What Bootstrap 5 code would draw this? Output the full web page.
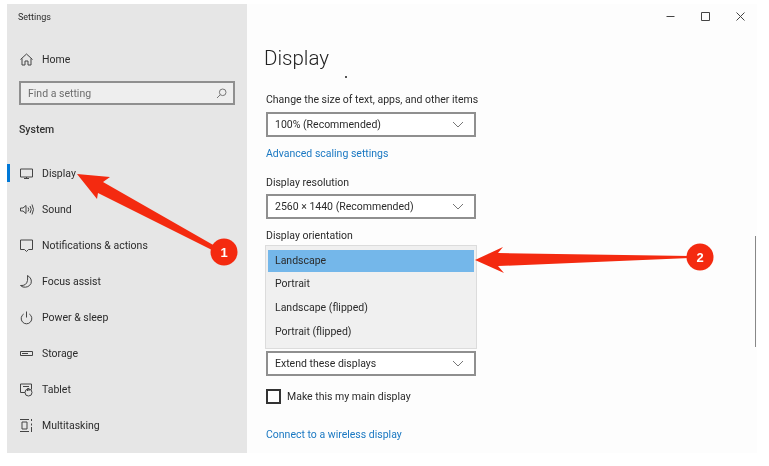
<!DOCTYPE html>
<html lang="en">
<head>
<meta charset="utf-8">
<title>Settings</title>
<link href="https://cdn.jsdelivr.net/npm/bootstrap@5.3.0/dist/css/bootstrap.min.css" rel="stylesheet">
<style>
html,body{height:100%;}
body{background:#fff;color:#2b2b2b;font-family:Roboto,"Open Sans","Liberation Sans",sans-serif;font-size:10.5px;line-height:14px;overflow:hidden;filter:blur(.25px);}
.shot{position:relative;width:769px;height:466px;padding:4px 12px 13px 7px;}
.winbox{height:449px;background:#fdfdfd;}
.sidepane{width:240px;background:#e6e6e6;flex:none;}
.apptitle{padding:6px 0 0 11px;height:25px;font-size:9px;}
.homerow{margin-top:20px;height:20px;padding-left:12px;}
.ico{width:15px;height:15px;flex:none;margin-right:8px;fill:none;stroke:#444;stroke-width:1;}
.nudge{margin-top:2px;}
.findbox{margin:12px 12px 0;height:24px;border:2px solid #8f8f8f;background:#eeeeee;padding:0 6px 0 7px;color:#6d6d6d;}
.systitle{margin:18px 0 0 12px;height:20px;font-weight:500;color:#333;}
.sidelist{margin-top:12px;}
.siderow{height:36px;padding-left:12px;position:relative;}
.siderow.cur::before{content:"";position:absolute;left:0;top:9px;width:3px;height:18px;background:#0078d7;}
.mainpane{position:relative;padding:0 0 0 19px;}
.topctl{height:24px;margin-right:-1px;justify-content:flex-end;}
.topctl span{width:35px;height:24px;display:flex;align-items:center;justify-content:center;}
.topctl svg{width:11px;height:11px;fill:none;stroke:#444;stroke-width:1;}
.pagetitle{margin:16px 0 0 -2px;height:28px;font-size:20.5px;line-height:28px;font-weight:300;color:#222;}
.tinydot{position:absolute;left:98px;top:72px;width:2px;height:2px;background:#555;}
.fieldlbl{height:14px;}
.lbl1{margin-top:21px;}
.pick{width:210px;height:25px;border:2px solid #8f8f8f;background:#fff;padding:0 10px 0 7px;margin-top:5px;}
.pick svg{width:12px;height:7px;fill:none;stroke:#777;stroke-width:1;}
.pick2{margin-top:4px;}
.bluelink{display:block;color:#1a78c2;text-decoration:none;}
.link1{margin-top:10px;}
.lbl2{margin-top:15px;}
.lbl3{margin-top:10px;}
.popmenu{width:212px;margin:2px 0 2px -1px;padding:4px 2px;height:104px;background:#f0f0f0;border:1px solid #dcdcdc;}
.popitem{height:24px;padding:0 0 1px 7px;display:flex;align-items:center;}
.popitem.sel{height:22px;background:#74b7ea;}
.tick{width:15px;height:15px;border:2px solid #333;background:#fff;margin-right:6px;flex:none;}
.tickrow{margin-top:13px;}
.link2{margin-top:24px;}
.scrollthumb{position:absolute;right:1px;top:232px;width:1px;height:111px;background:#888;}
.marks{position:absolute;left:0;top:0;width:769px;height:466px;pointer-events:none;}
.marks text{font:700 13px "Liberation Sans",sans-serif;fill:#fff;text-anchor:middle;}
</style>
</head>
<body>
<div class="shot">
  <div class="winbox d-flex">
    <aside class="sidepane">
      <div class="apptitle">Settings</div>
      <div class="homerow d-flex align-items-center">
        <svg class="ico" viewBox="0 0 15 15"><path d="M1.500 7.500 7.500 2l6 5.500M3 6.500V13h3V9h3v4h3V6.500"/></svg><span class="nudge">Home</span>
      </div>
      <div class="findbox d-flex align-items-center justify-content-between">
        <span class="nudge">Find a setting</span>
        <svg width="11" height="11" viewBox="0 0 11 11" fill="none" stroke="#777"><circle cx="6.700" cy="4.300" r="3.300"/><path d="M4.300 6.700 1 10"/></svg>
      </div>
      <div class="systitle">System</div>
      <div class="sidelist">
        <div class="siderow cur d-flex align-items-center"><svg class="ico" viewBox="0 0 15 15"><path d="M1.500 3h12v8h-12zM5 12.500h5M7.500 11v1.500"/></svg><span class="nudge">Display</span></div>
        <div class="siderow d-flex align-items-center"><svg class="ico" viewBox="0 0 15 15"><path d="M1.500 6v3H4l3 2.500v-8L4 6zM9 5.500q1.500 2 0 4M11 4q2.500 3.500 0 7M13 2.500q3 5 0 10"/></svg><span class="nudge">Sound</span></div>
        <div class="siderow d-flex align-items-center"><svg class="ico" viewBox="0 0 15 15"><path d="M1.500 2h12v9.500h-4l-2 2-2-2h-4z"/></svg><span class="nudge">Notifications &amp; actions</span></div>
        <div class="siderow d-flex align-items-center"><svg class="ico" viewBox="0 0 15 15"><path d="M8.500 1.500q5 3 3.500 8-2.500 4.500-8 3.500-1.500-.5-2.500-1.500 6 .5 7-5 .3-2.500 0-5z"/></svg><span class="nudge">Focus assist</span></div>
        <div class="siderow d-flex align-items-center"><svg class="ico" viewBox="0 0 15 15"><path d="M4.700 4a5.300 5.300 0 1 0 5.600 0M7.500 1.500v6"/></svg><span class="nudge">Power &amp; sleep</span></div>
        <div class="siderow d-flex align-items-center"><svg class="ico" viewBox="0 0 15 15"><path d="M1.500 5.500h12v4h-12zM3 7.500h6"/></svg><span class="nudge">Storage</span></div>
        <div class="siderow d-flex align-items-center"><svg class="ico" viewBox="0 0 15 15"><path d="M6 10.500H1.500V2h11v5.500M4 4.500h6"/><circle cx="9.500" cy="10.500" r="3.500"/><path d="M8.500 9V6.500h1.500V9"/></svg><span class="nudge">Tablet</span></div>
        <div class="siderow d-flex align-items-center"><svg class="ico" viewBox="0 0 15 15"><path d="M1 1.500h9M1 13.500h9M3 4h5v7H3zM12.500 1v2M12.500 5.500v2M12.500 9v5"/></svg><span class="nudge">Multitasking</span></div>
      </div>
    </aside>
    <main class="mainpane flex-grow-1">
      <div class="topctl d-flex">
        <span><svg viewBox="0 0 11 11"><path d="M1.500 5.500h8"/></svg></span>
        <span><svg viewBox="0 0 11 11"><path d="M1.500 1.500h8v8h-8z"/></svg></span>
        <span><svg viewBox="0 0 11 11"><path d="M1.500 1.500l8 8M9.500 1.500l-8 8"/></svg></span>
      </div>
      <div class="pagetitle">Display</div>
      <div class="tinydot"></div>
      <div class="fieldlbl lbl1">Change the size of text, apps, and other items</div>
      <div class="pick d-flex align-items-center justify-content-between"><span>100% (Recommended)</span><svg viewBox="0 0 12 7"><path d="M1 1l5 5 5-5"/></svg></div>
      <a class="bluelink link1" href="#">Advanced scaling settings</a>
      <div class="fieldlbl lbl2">Display resolution</div>
      <div class="pick pick2 d-flex align-items-center justify-content-between"><span>2560 × 1440 (Recommended)</span><svg viewBox="0 0 12 7"><path d="M1 1l5 5 5-5"/></svg></div>
      <div class="fieldlbl lbl3">Display orientation</div>
      <div class="popmenu">
        <div class="popitem sel">Landscape</div>
        <div class="popitem">Portrait</div>
        <div class="popitem">Landscape (flipped)</div>
        <div class="popitem">Portrait (flipped)</div>
      </div>
      <div class="pick d-flex align-items-center justify-content-between mt-0"><span>Extend these displays</span><svg viewBox="0 0 12 7"><path d="M1 1l5 5 5-5"/></svg></div>
      <div class="tickrow d-flex align-items-center"><span class="tick"></span><span>Make this my main display</span></div>
      <a class="bluelink link2" href="#">Connect to a wireless display</a>
      <div class="scrollthumb"></div>
    </main>
  </div>
  <svg class="marks" viewBox="0 0 769 466">
    <polygon fill="#f42a10" points="77,174 110,177 103,182 215,246 212,250 98,193 97,199"/>
    <circle cx="224" cy="252" r="13.500" fill="#f42a10"/>
    <text x="224" y="257">1</text>
    <polygon fill="#f42a10" points="475,260 503,247 498,253 690,256 690,258 498,266 504,273"/>
    <circle cx="700" cy="257" r="13.500" fill="#f42a10"/>
    <text x="700" y="262">2</text>
  </svg>
</div>
</body>
</html>
